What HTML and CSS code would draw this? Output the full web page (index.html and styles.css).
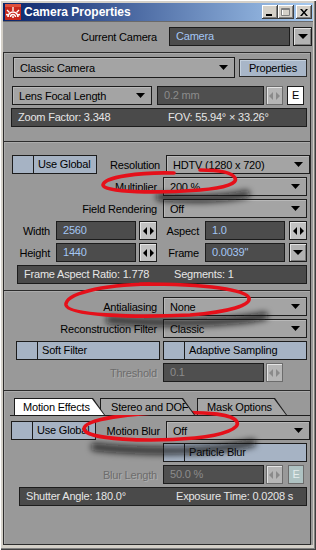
FILE: index.html
```html
<!DOCTYPE html>
<html>
<head>
  <title>Camera Properties</title>
  <link rel="stylesheet" href="styles.css">
</head>
<body>
  <div class="window">
    <div class="titlebar">
      <svg class="app-icon" width="16" height="16" viewBox="0 0 16 16">
        <rect width="16" height="16" fill="#c8281c"/>
        <rect x="0" y="0" width="16" height="3" fill="#e0503c"/>
        <path d="M3 13 A5 5 0 0 1 13 13" fill="none" stroke="#fff" stroke-width="1.6"/>
        <path d="M5.5 13 A2.5 2.5 0 0 1 10.5 13" fill="none" stroke="#fff" stroke-width="1.4"/>
        <path d="M8 7 L8 3 M4.5 8.5 L2 6 M11.5 8.5 L14 6 M3.5 11 L1 10.5 M12.5 11 L15 10.5" stroke="#fff" stroke-width="1.3"/>
        <circle cx="8" cy="13" r="1" fill="#fff"/>
      </svg>
      <span class="title">Camera Properties</span>
      <div class="tb-buttons">
        <span class="tb-btn"><svg width="8" height="8" viewBox="0 0 8 8"><rect x="0" y="6" width="6" height="2" fill="#000"/></svg></span>
        <span class="tb-btn"><svg width="10" height="9" viewBox="0 0 10 9"><path d="M1.5 1.5h7v6h-7z" fill="none" stroke="#fff"/><path d="M0.5 0.5h8v7h-8z M0.5 1.5h8" fill="none" stroke="#808080"/></svg></span>
        <span class="tb-btn close"><svg width="8" height="7" viewBox="0 0 8 7"><path d="M0 0h2l2 2.5 2-2.5h2l-3 3.5 3 3.5h-2l-2-2.5-2 2.5h-2l3-3.5z" fill="#000"/></svg></span>
      </div>
    </div>

    <div class="client">
      <div class="head-row">
        <span class="lbl">Current Camera</span>
        <div class="field value cam-field">Camera</div>
        <span class="drop-btn"><svg width="10" height="5" viewBox="0 0 10 5"><path d="M0 0H10L5 5z"/></svg></span>
      </div>

      <div class="section s1">
        <div class="row classic-row">
          <div class="drop classic-drop"><span>Classic Camera</span><svg width="9" height="5" viewBox="0 0 9 5"><path d="M0 0H9L4.5 5z"/></svg></div>
          <div class="props-btn">Properties</div>
        </div>
        <div class="row lens-row">
          <div class="drop lens-drop"><span>Lens Focal Length</span><svg width="9" height="5" viewBox="0 0 9 5"><path d="M0 0H9L4.5 5z"/></svg></div>
          <div class="field off lens-field">0.2 mm</div>
          <span class="spin off"><svg width="11" height="8" viewBox="0 0 11 8"><path d="M4 0L0 4L4 8z M7 0L11 4L7 8z"/></svg></span>
          <span class="e-btn">E</span>
        </div>
        <div class="info info-1"><span class="info-a">Zoom Factor: 3.348</span><span>FOV: 55.94° × 33.26°</span></div>
      </div>

      <div class="section s2">
        <div class="row">
          <div class="check use-global"><span class="box"></span><span>Use Global</span></div>
          <span class="lbl grow">Resolution</span>
          <div class="drop wide"><span>HDTV (1280 x 720)</span><svg width="9" height="5" viewBox="0 0 9 5"><path d="M0 0H9L4.5 5z"/></svg></div>
        </div>
        <div class="row">
          <span class="lbl">Multiplier</span>
          <div class="drop wide"><span>200 %</span><svg width="9" height="5" viewBox="0 0 9 5"><path d="M0 0H9L4.5 5z"/></svg></div>
        </div>
        <div class="row">
          <span class="lbl">Field Rendering</span>
          <div class="drop wide"><span>Off</span><svg width="9" height="5" viewBox="0 0 9 5"><path d="M0 0H9L4.5 5z"/></svg></div>
        </div>
        <div class="row">
          <span class="lbl lbl-sm">Width</span>
          <div class="field value num">2560</div>
          <span class="spin sp-a"><svg width="11" height="8" viewBox="0 0 11 8"><path d="M4 0L0 4L4 8z M7 0L11 4L7 8z"/></svg></span>
          <span class="lbl lbl-mid">Aspect</span>
          <div class="field value num">1.0</div>
          <span class="spin sp-b"><svg width="11" height="8" viewBox="0 0 11 8"><path d="M4 0L0 4L4 8z M7 0L11 4L7 8z"/></svg></span>
        </div>
        <div class="row">
          <span class="lbl lbl-sm">Height</span>
          <div class="field value num">1440</div>
          <span class="spin sp-a"><svg width="11" height="8" viewBox="0 0 11 8"><path d="M4 0L0 4L4 8z M7 0L11 4L7 8z"/></svg></span>
          <span class="lbl lbl-mid">Frame</span>
          <div class="field value num">0.0039"</div>
          <span class="drop-btn sp-b"><svg width="10" height="5" viewBox="0 0 10 5"><path d="M0 0H10L5 5z"/></svg></span>
        </div>
        <div class="info info-2"><span class="info-a">Frame Aspect Ratio: 1.778</span><span>Segments: 1</span></div>
      </div>

      <div class="section s3">
        <div class="row">
          <span class="lbl">Antialiasing</span>
          <div class="drop wide"><span>None</span><svg width="9" height="5" viewBox="0 0 9 5"><path d="M0 0H9L4.5 5z"/></svg></div>
        </div>
        <div class="row">
          <span class="lbl">Reconstruction Filter</span>
          <div class="drop wide"><span>Classic</span><svg width="9" height="5" viewBox="0 0 9 5"><path d="M0 0H9L4.5 5z"/></svg></div>
        </div>
        <div class="row">
          <div class="check soft"><span class="box"></span><span>Soft Filter</span></div>
          <div class="check adaptive"><span class="box"></span><span>Adaptive Sampling</span></div>
        </div>
        <div class="row">
          <span class="lbl dim">Threshold</span>
          <div class="field off short">0.1</div>
          <span class="spin off sp-t"><svg width="11" height="8" viewBox="0 0 11 8"><path d="M4 0L0 4L4 8z M7 0L11 4L7 8z"/></svg></span>
        </div>
      </div>

      <div class="section s4">
        <div class="tabstrip">
          <span class="tab active"><span class="tab-in">Motion Effects</span></span>
          <span class="tab t2"><span class="tab-in">Stereo and DOF</span></span>
          <span class="tab t3"><span class="tab-in">Mask Options</span></span>
        </div>
        <div class="row">
          <div class="check use-global ug2"><span class="box"></span><span>Use Global</span></div>
          <span class="lbl grow">Motion Blur</span>
          <div class="drop wide"><span>Off</span><svg width="9" height="5" viewBox="0 0 9 5"><path d="M0 0H9L4.5 5z"/></svg></div>
        </div>
        <div class="row">
          <div class="check particle"><span class="box"></span><span>Particle Blur</span></div>
        </div>
        <div class="row">
          <span class="lbl dim">Blur Length</span>
          <div class="field off short">50.0 %</div>
          <span class="spin off sp-t"><svg width="11" height="8" viewBox="0 0 11 8"><path d="M4 0L0 4L4 8z M7 0L11 4L7 8z"/></svg></span>
          <span class="e-btn e-off">E</span>
        </div>
        <div class="info info-4"><span class="info-a">Shutter Angle: 180.0°</span><span>Exposure Time: 0.0208 s</span></div>
      </div>
    </div>

    <svg class="marks" width="316" height="550" viewBox="0 0 316 550">
      <defs>
        <filter id="soft" x="-20%" y="-80%" width="140%" height="260%">
          <feGaussianBlur stdDeviation="3.2"/>
        </filter>
      </defs>
      <g fill="none" stroke="rgba(10,10,10,0.75)" stroke-width="8" stroke-linecap="round" filter="url(#soft)">
        <path d="M160 197 C190 200, 228 199, 246 194"/>
        <path d="M110 320 C170 325, 232 323, 264 316"/>
        <path d="M95 447 C150 453, 215 452, 252 443"/>
      </g>
      <g fill="none" stroke="#e5101a" stroke-width="3.6" stroke-linecap="round">
        <path d="M174 173 C140 172, 104 177, 103 185 C104 193, 160 193, 200 190 C226 188, 238 183, 235 178 C232 172, 216 170, 200 170"/>
        <path d="M150 284 C100 285, 65 294, 66 305 C68 315, 130 318, 190 315 C230 312, 251 305, 249 298 C246 290, 210 284, 140 284"/>
        <path d="M180 412 C130 413, 84 419, 84 429 C85 440, 150 442, 195 438 C225 435, 240 428, 237 422 C234 415, 210 411, 168 413"/>
      </g>
    </svg>
  </div>
</body>
</html>
```

FILE: styles.css
```css
* {
  box-sizing: border-box;
}

body {
  margin: 0;
  font-family: "Liberation Sans", Arial, sans-serif;
  font-size: 11px;
  letter-spacing: -0.2px;
  background-color: #d4d0c8;
}

.window {
  position: relative;
  width: 316px;
  height: 550px;
  padding: 3px 3px 5px 3px;
  background-color: #d4d0c8;
  box-shadow: inset 1px 1px #fff, inset -1px -1px #404040, inset -2px -2px #808080;
  display: flex;
  flex-direction: column;
}

.titlebar {
  height: 18px;
  display: flex;
  align-items: center;
  padding-left: 2px;
  background: linear-gradient(to right, #0a246a, #a6caf0);
}

.app-icon {
  display: block;
}

.title {
  margin-left: 3px;
  color: #fff;
  font-weight: bold;
  font-size: 12px;
  letter-spacing: 0;
}

.tb-buttons {
  margin-left: auto;
  display: flex;
  padding-right: 1px;
}

.tb-btn {
  width: 16px;
  height: 14px;
  display: flex;
  align-items: center;
  justify-content: center;
  background-color: #d4d0c8;
  box-shadow: inset -1px -1px #404040, inset 1px 1px #fff, inset -2px -2px #808080;
}

.tb-btn.close {
  margin-left: 2px;
}

.client {
  flex: 1;
  display: flex;
  flex-direction: column;
  background-color: #999;
  border-top: 1px solid #6a6a6a;
}

.head-row {
  display: flex;
  align-items: center;
  padding: 5px 0 6px 0;
}

.head-row .lbl {
  width: 154px;
}

.lbl {
  width: 153px;
  margin-right: 6px;
  text-align: right;
  color: #000;
  white-space: nowrap;
}

.lbl.grow {
  width: auto;
  flex: 1;
}

.lbl.dim {
  color: #6c6c6c;
  text-shadow: 1px 1px 0 #aeaeae;
}

.lbl-sm {
  width: 46px;
}

.lbl-mid {
  width: 42px;
}

.section {
  margin-right: 2px;
  border: 1px solid #2c2c2c;
  border-bottom: none;
  box-shadow: inset 1px 1px #ababab;
}

.s1 {
  padding: 4px 0 14px 0;
}

.s2 {
  padding: 13px 0 6px 0;
}

.s3 {
  padding: 6px 0 8px 0;
}

.s4 {
  flex: 1;
  padding-top: 7px;
  border-bottom: 1px solid #2c2c2c;
}

.row {
  display: flex;
  align-items: center;
  height: 19px;
  margin-top: 3px;
}

.s1 .row:first-child,
.s2 .row:first-child,
.s3 .row:first-child {
  margin-top: 0;
}

.field {
  height: 19px;
  line-height: 17px;
  padding-left: 6px;
  background-color: #4c4c4c;
  border: 1px solid #1c1c1c;
  white-space: nowrap;
}

.field.value {
  color: #a4c6f4;
}

.field.off {
  color: #8c8c8c;
  background-color: #4f4f4f;
}

.cam-field {
  width: 121px;
  margin-left: 6px;
}

.num {
  width: 80px;
}

.short {
  width: 101px;
}

.drop {
  display: flex;
  align-items: center;
  justify-content: space-between;
  height: 19px;
  padding: 0 6px;
  background-color: #a4a4a4;
  border: 1px solid #1c1c1c;
  box-shadow: inset 1px 1px #b8b8b8;
  color: #000;
  white-space: nowrap;
}

.drop svg {
  display: block;
  fill: #000;
}

.drop.wide {
  width: 144px;
}

.drop-btn {
  width: 19px;
  height: 19px;
  margin-left: 3px;
  display: flex;
  align-items: center;
  justify-content: center;
  background-color: #b2b2b2;
  border: 1px solid #1c1c1c;
  box-shadow: inset 1px 1px #e0e0e0, inset -1px -1px #7a7a7a;
}

.drop-btn svg {
  fill: #000;
}

.classic-row {
  height: 21px;
}

.classic-drop {
  width: 222px;
  height: 21px;
  margin-left: 9px;
}

.props-btn {
  width: 68px;
  height: 18px;
  margin-left: 4px;
  line-height: 16px;
  text-align: center;
  background-color: #a8b6c8;
  border: 1px solid #2c2c2c;
  box-shadow: inset 1px 1px #c4d0de;
}

.lens-row {
  margin-top: 8px !important;
}

.lens-drop {
  width: 140px;
  margin-left: 8px;
}

.lens-field {
  width: 107px;
  margin-left: 5px;
}

.spin {
  width: 18px;
  height: 19px;
  display: flex;
  align-items: center;
  justify-content: center;
  background-color: #c2c2c2;
  border: 1px solid #1c1c1c;
  box-shadow: inset 1px 1px #e4e4e4;
}

.spin svg {
  fill: #000;
}

.spin.off {
  width: 17px;
  background-color: #b6b6b6;
  border-color: #6c6c6c;
}

.spin.off svg {
  fill: #8a8a8a;
}

.lens-row .spin {
  margin-left: 2px;
}

.sp-a {
  margin-left: 3px;
}

.sp-b {
  width: 18px;
  margin-left: 4px;
}

.sp-t {
  margin-left: 2px;
}

.e-btn {
  width: 17px;
  height: 19px;
  margin-left: 4px;
  line-height: 17px;
  text-align: center;
  background-color: #fff;
  border: 1px solid #1c1c1c;
  color: #000;
}

.e-btn.e-off {
  width: 16px;
  margin-left: 5px;
  background-color: #aec2c2;
  border-color: #6c6c6c;
  color: #e4ecec;
}

.info {
  display: flex;
  height: 19px;
  margin-top: 3px;
  padding-left: 6px;
  line-height: 17px;
  background-color: #4a4a4a;
  border: 1px solid #1c1c1c;
  color: #e6e6e6;
  white-space: nowrap;
}

.info-a {
  width: 150px;
}

.info-1 {
  width: 296px;
  margin-left: 7px;
}

.info-2 {
  width: 290px;
  margin-left: 13px;
}

.info-4 {
  width: 288px;
  margin-left: 15px;
}

.check {
  display: flex;
  height: 19px;
  line-height: 17px;
  background-color: #a6b3c4;
  border: 1px solid #1c1c1c;
  color: #000;
  white-space: nowrap;
  overflow: hidden;
}

.check .box {
  width: 21px;
  margin-right: 4px;
  border-right: 1px solid #1c1c1c;
}

.use-global {
  width: 85px;
  margin-left: 8px;
}

.ug2 {
  margin-left: 7px;
}

.soft {
  width: 144px;
  margin-left: 12px;
}

.adaptive {
  width: 144px;
  margin-left: 3px;
}

.particle {
  width: 144px;
  margin-left: 159px;
}

.tabstrip {
  display: flex;
  height: 18px;
  margin-left: 6px;
  padding-left: 4px;
  border-bottom: 1px solid #1c1c1c;
}

.tab {
  position: relative;
  height: 17px;
  padding: 1px 1px 0 1px;
  background-color: #1c1c1c;
  clip-path: polygon(0 0, calc(100% - 12px) 0, 100% 100%, 0 100%);
}

.tab-in {
  display: block;
  height: 16px;
  line-height: 16px;
  padding-left: 8px;
  background-color: #a6a6a6;
  clip-path: polygon(0 0, calc(100% - 12px) 0, 100% 100%, 0 100%);
  color: #000;
  white-space: nowrap;
}

.tab.active {
  width: 91px;
  z-index: 2;
}

.tab.active .tab-in {
  background-color: #fff;
}

.t2 {
  width: 95px;
  margin-left: -5px;
  z-index: 1;
}

.t2 .tab-in {
  padding-left: 10px;
}

.t3 {
  width: 90px;
  margin-left: 2px;
}

.t3 .tab-in {
  padding-left: 9px;
}

.s4 .tabstrip + .row {
  margin-top: 5px;
}

.marks {
  position: absolute;
  top: 0;
  left: 0;
  pointer-events: none;
}
```
